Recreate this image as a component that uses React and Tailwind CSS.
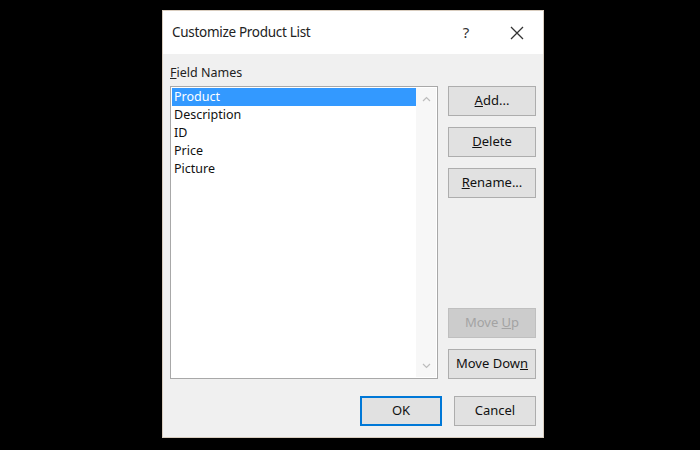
import React from "react";

const font = { fontFamily: "'Noto Sans', 'Open Sans', sans-serif" };

const Btn = ({ children, className = "", disabled = false }) => (
    <div
        className={`flex items-center justify-center h-[30px] border text-[13px] ${
            disabled ? "bg-[#cccccc] border-[#bfbfbf] text-[#a3a3a3]" : "bg-[#e1e1e1] border-[#adadad] text-[#111]"
        } ${className}`}
    >
        {children}
    </div>
);

const App = () => {
    const fields = ["Product", "Description", "ID", "Price", "Picture"];

    return (
        <div className="w-[700px] h-[450px] bg-black pl-[162px] pt-[10px]" style={font}>
            <div className="w-[382px] h-[428px] border border-[#d9cdbf] bg-[#f0f0f0] flex flex-col">
                {/* title bar */}
                <div className="h-[43px] bg-white flex items-center pl-[9px] text-[13.5px] text-[#222]">
                    <span className="flex-1 tracking-[-0.3px]">Customize Product List</span>
                    <span className="w-[20px] mr-[15px] text-center text-[15px] text-[#333]">?</span>
                    <span className="w-[52px] flex justify-center">
                        <svg width="14" height="14" viewBox="0 0 14 14" stroke="#333" strokeWidth="1.3">
                            <path d="M1 1 L13 13 M13 1 L1 13" />
                        </svg>
                    </span>
                </div>

                {/* body */}
                <div className="flex-1 px-[7px] flex flex-col">
                    <div className="h-[32px] pt-[11px] text-[12.5px] text-[#222] leading-[16px]">
                        <span className="underline">F</span>ield Names
                    </div>
                    <div className="flex gap-[10px]">
                        {/* listbox */}
                        <div className="w-[268px] h-[293px] bg-white border border-[#a8a8a8] flex p-[1px]">
                            <div className="flex-1 flex flex-col text-[12.5px] text-[#111] leading-[18px]">
                                {fields.map((f, i) => (
                                    <div key={f} className={i === 0 ? "bg-[#3399ff] text-white pl-[2px] h-[18px]" : "pl-[2px] h-[18px]"}>
                                        {f}
                                    </div>
                                ))}
                            </div>
                            <div className="w-[20px] bg-[#f7f7f7] flex flex-col items-center justify-between py-[8px]">
                                <svg width="9" height="6" viewBox="0 0 9 6" fill="none" stroke="#bdbdbd" strokeWidth="1.2">
                                    <path d="M1 5 L4.5 1.5 L8 5" />
                                </svg>
                                <svg width="9" height="6" viewBox="0 0 9 6" fill="none" stroke="#bdbdbd" strokeWidth="1.2">
                                    <path d="M1 1 L4.5 4.5 L8 1" />
                                </svg>
                            </div>
                        </div>

                        {/* side buttons */}
                        <div className="w-[88px] h-[293px] flex flex-col">
                            <Btn>
                                <span><span className="underline">A</span>dd...</span>
                            </Btn>
                            <Btn className="mt-[11px]">
                                <span><span className="underline">D</span>elete</span>
                            </Btn>
                            <Btn className="mt-[11px]">
                                <span><span className="underline">R</span>ename...</span>
                            </Btn>
                            <div className="flex-1" />
                            <Btn disabled>
                                <span>Move <span className="underline">U</span>p</span>
                            </Btn>
                            <Btn className="mt-[11px]">
                                <span>Move Dow<span className="underline">n</span></span>
                            </Btn>
                        </div>
                    </div>

                    {/* footer */}
                    <div className="flex justify-end gap-[12px] mt-[17px]">
                        <Btn className="w-[82px] !border-2 !border-[#0078d7]">OK</Btn>
                        <Btn className="w-[82px]">Cancel</Btn>
                    </div>
                </div>
            </div>
        </div>
    );
};

export default App;
